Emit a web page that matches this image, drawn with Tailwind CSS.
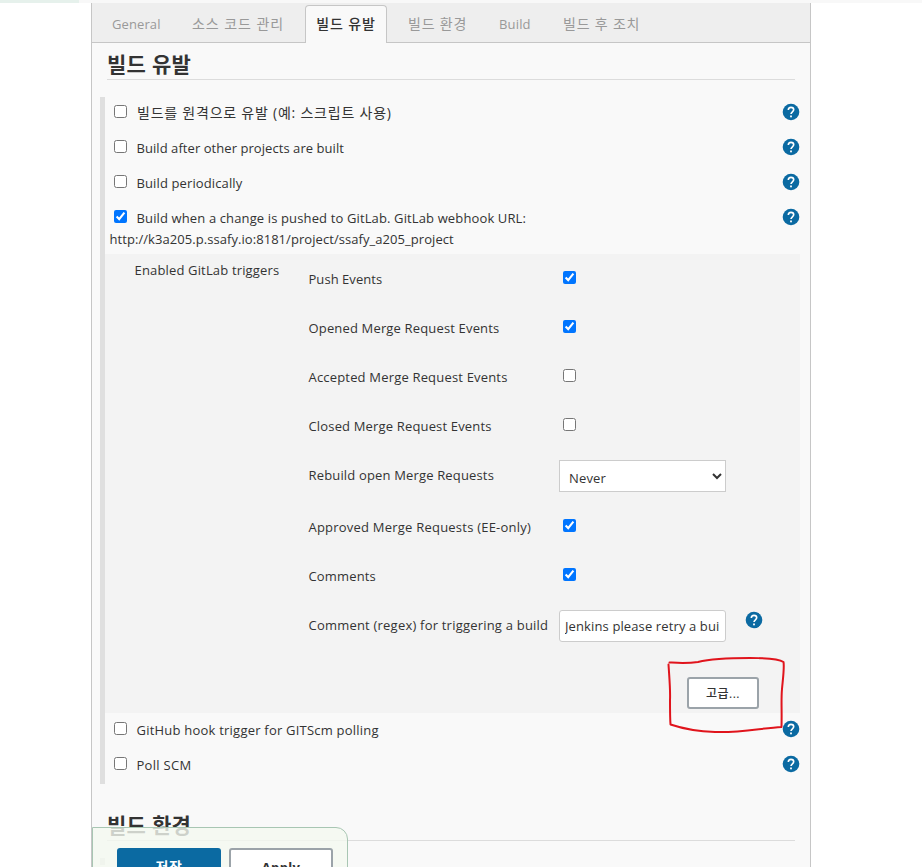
<!DOCTYPE html>
<html lang="ko">
<head>
<meta charset="utf-8">
<title>빌드 유발</title>
<script src="https://cdn.jsdelivr.net/npm/@tailwindcss/browser@4"></script>
</head>
<body class="relative h-[867px] w-[922px] overflow-hidden bg-white font-['Open_Sans','Noto_Sans_CJK_KR',sans-serif] text-[13px] leading-[21px] tracking-[0.16px] text-[#333] whitespace-nowrap">
<svg class="hidden">
  <symbol id="help" viewBox="-0.5 -0.5 18 18">
    <circle cx="8.5" cy="8.5" r="8.3" fill="#0b6aa2"/>
    <path d="M5.8 6.6C5.8 4.9 7 3.9 8.5 3.9S11.2 4.9 11.2 6.3C11.2 8.2 8.5 8.4 8.5 10.6" fill="none" stroke="#fff" stroke-width="1.6"/>
    <rect x="7.6" y="12" width="1.8" height="1.8" fill="#fff"/>
  </symbol>
</svg>
<div class="h-[3px] bg-[#f8f8f8]"><div class="h-full w-[79px] bg-[#e6f1ec]"></div></div>
<main class="ml-[91px] h-[864px] w-[720px] border-x border-[#c6c6c6] bg-[#f9f9f9]">
  <nav class="flex h-[40px] items-end border-b border-[#c6c6c6] bg-[#eee] text-[#999]">
    <div class="ml-[20px] w-[80px] pb-[7px] tracking-[0.1px]">General</div>
    <div class="w-[113px] pb-[8px] text-[14px] tracking-[0.95px]">소스 코드 관리</div>
    <div class="-mb-px h-[38px] w-[82px] rounded-t-[4px] border border-b-0 border-[#c6c6c6] bg-[#f9f9f9] pt-[7px] text-center text-[14px] font-medium tracking-[0.9px] text-[#333]">빌드 유발</div>
    <div class="ml-[21px] w-[91px] pb-[8px] text-[14px] tracking-[0.8px]">빌드 환경</div>
    <div class="w-[64px] pb-[7px]">Build</div>
    <div class="pb-[8px] text-[14px] tracking-[0.8px]">빌드 후 조치</div>
  </nav>
  <h2 class="mr-[15px] ml-[15px] h-[37px] border-b border-[#dcdcdc] pt-[6px] text-[21px] leading-[30px] font-bold tracking-[0.3px]">빌드 유발</h2>
  <section class="mt-[17px] ml-[8px] w-[700px] border-l-[5px] border-[#dfdfdf]">
    <div class="flex h-[35px] items-start pl-[9px]">
      <input type="checkbox" class="mt-[8px] size-[13px]">
      <span class="mt-[5px] ml-[10px] text-[14px] tracking-[0.77px]">빌드를 원격으로 유발 (예: 스크립트 사용)</span>
      <svg class="mt-[6px] ml-auto size-[18px]"><use href="#help"/></svg>
    </div>
    <div class="flex h-[35px] items-start pl-[9px]">
      <input type="checkbox" class="mt-[8px] size-[13px]">
      <span class="mt-[6px] ml-[9.5px] tracking-[0.06px]">Build after other projects are built</span>
      <svg class="mt-[6px] ml-auto size-[18px]"><use href="#help"/></svg>
    </div>
    <div class="flex h-[35px] items-start pl-[9px]">
      <input type="checkbox" class="mt-[8px] size-[13px]">
      <span class="mt-[6px] ml-[9.5px] tracking-[0.12px]">Build periodically</span>
      <svg class="mt-[6px] ml-auto size-[18px]"><use href="#help"/></svg>
    </div>
    <div class="h-[52px]">
      <div class="flex h-[27px] items-start pl-[9px]">
        <input type="checkbox" checked class="mt-[8px] size-[13px]">
        <span class="mt-[6px] ml-[9.5px] tracking-[0.13px]">Build when a change is pushed to GitLab. GitLab webhook URL:</span>
        <svg class="mt-[6px] ml-auto size-[18px]"><use href="#help"/></svg>
      </div>
      <div class="pl-[4.5px] tracking-[0.06px]">http://k3a205.p.ssafy.io:8181/project/ssafy_a205_project</div>
    </div>
    <div class="flex h-[459px] bg-[#f3f3f3]">
      <div class="w-[203.5px] pt-[6px] pl-[29.5px]">Enabled GitLab triggers</div>
      <div class="flex-1">
        <div class="flex h-[49px] items-start"><span class="mt-[15px] w-[254.5px] tracking-[0.05px]">Push Events</span><input type="checkbox" checked class="mt-[17px] size-[13px]"></div>
        <div class="flex h-[49px] items-start"><span class="mt-[15px] w-[254.5px]">Opened Merge Request Events</span><input type="checkbox" checked class="mt-[17px] size-[13px]"></div>
        <div class="flex h-[49px] items-start"><span class="mt-[15px] w-[254.5px] tracking-[0.18px]">Accepted Merge Request Events</span><input type="checkbox" class="mt-[17px] size-[13px]"></div>
        <div class="flex h-[49px] items-start"><span class="mt-[15px] w-[254.5px]">Closed Merge Request Events</span><input type="checkbox" class="mt-[17px] size-[13px]"></div>
        <div class="flex h-[52px] items-start"><span class="mt-[15px] w-[250.5px]">Rebuild open Merge Requests</span>
          <select class="mt-[10px] h-[32px] w-[167px] border border-[#ccc] bg-white pt-[3px] pr-[1px] pl-[5px]"><option>Never</option></select></div>
        <div class="flex h-[49px] items-start"><span class="mt-[15px] w-[254.5px] tracking-[0.22px]">Approved Merge Requests (EE-only)</span><input type="checkbox" checked class="mt-[17px] size-[13px]"></div>
        <div class="flex h-[49px] items-start"><span class="mt-[15px] w-[254.5px]">Comments</span><input type="checkbox" checked class="mt-[17px] size-[13px]"></div>
        <div class="flex h-[77px] items-start"><span class="mt-[15px] w-[250.5px] tracking-[0.21px]">Comment (regex) for triggering a build</span>
          <input type="text" value="Jenkins please retry a build" class="mt-[10px] h-[32px] w-[167px] rounded-[3px] border border-[#ccc] bg-white pr-[6px] pl-[5px] tracking-[0.12px]">
          <svg class="mt-[11px] ml-[19px] size-[18px]"><use href="#help"/></svg></div>
        <button class="ml-[378.5px] block h-[32px] w-[72px] rounded-[3px] border-2 border-[#9ba3a9] bg-white pt-px text-[12px] leading-[26px] font-medium tracking-[0.5px]">고급...</button>
      </div>
    </div>
    <div class="flex h-[35px] items-start pl-[9px]">
      <input type="checkbox" class="mt-[9px] size-[13px]">
      <span class="mt-[7px] ml-[9.5px] tracking-[0.22px]">GitHub hook trigger for GITScm polling</span>
      <svg class="mt-[7px] ml-auto size-[18px]"><use href="#help"/></svg>
    </div>
    <div class="flex h-[36px] items-start pl-[9px]">
      <input type="checkbox" class="mt-[9px] size-[13px]">
      <span class="mt-[7px] ml-[9.5px] tracking-[0.3px]">Poll SCM</span>
      <svg class="mt-[7px] ml-auto size-[18px]"><use href="#help"/></svg>
    </div>
  </section>
  <h2 class="mr-[15px] ml-[15px] h-[57px] border-b border-[#dcdcdc] pt-[26px] text-[21px] leading-[30px] font-bold tracking-[0.3px]">빌드 환경</h2>
  <div class="mt-[17px] ml-[8px] h-[7px] w-[5px] bg-[#dfdfdf]"></div>
</main>
<!-- Sticky save bar -->
<div class="absolute top-[827px] left-[92px] flex h-[60px] w-[256px] gap-[8px] rounded-tr-[12px] border border-[#a8c6b3] bg-[#f4f9f0]/80 pt-[20px] pl-[24px]">
  <button class="h-[36px] w-[104px] rounded-[3px] bg-[#0b6aa2] text-[14px] font-bold tracking-[0.6px] text-white">저장</button>
  <button class="h-[36px] w-[104px] rounded-[3px] border-2 border-[#9ba3a9] bg-white pt-[2px] text-[13px] font-bold tracking-[0.3px]">Apply</button>
</div>
<!-- Hand-drawn highlight -->
<svg class="absolute top-[650px] left-[660px] h-[90px] w-[135px]" fill="none" stroke="#e0141c" stroke-width="2" stroke-linecap="round" stroke-linejoin="round">
  <path d="M8.500 14.500C9.500 30 10.500 40 10 50C10 60 10 68 10.500 74.500C24 79 38 81.500 55 82C80 83 102 78 121.500 77C122 60 121 50 122 39C123 28 124.500 17 123.500 12C119 9 108 8 90 8C70 8 50 9 38 12C27 13.500 20 13 9.500 12.500"/>
</svg>
</body>
</html>
